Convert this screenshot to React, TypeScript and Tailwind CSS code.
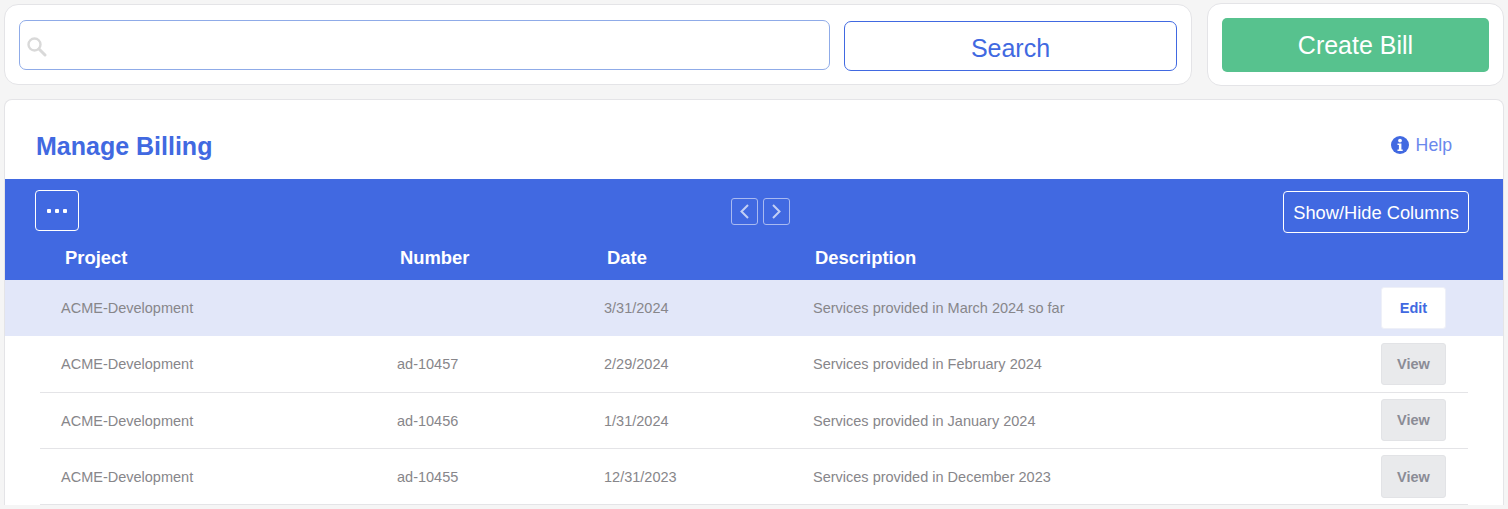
import React from "react";

const rows = [
  { project: "ACME-Development", number: "", date: "3/31/2024", desc: "Services provided in March 2024 so far", action: "Edit" },
  { project: "ACME-Development", number: "ad-10457", date: "2/29/2024", desc: "Services provided in February 2024", action: "View" },
  { project: "ACME-Development", number: "ad-10456", date: "1/31/2024", desc: "Services provided in January 2024", action: "View" },
  { project: "ACME-Development", number: "ad-10455", date: "12/31/2023", desc: "Services provided in December 2023", action: "View" },
];

export default function App() {
  return (
    <div className="h-[509px] w-[1508px] overflow-hidden bg-[#f5f5f5] font-['Liberation_Sans',Arial,sans-serif]">
      <div className="flex items-start pl-1 pr-1 pt-[3px]">
        <div className="mt-px flex h-[81px] w-[1188px] items-start rounded-[14px] border border-[#e4e4e7] bg-white pl-[14px] pt-[15px]">
          <div className="relative h-[50px] w-[811px] rounded-[7px] border border-[#8fabe8] bg-white">
            <svg className="absolute left-[6px] top-[15px]" width="21" height="21" viewBox="0 0 21 21" fill="none" stroke="#d9d9d9">
              <circle cx="8.5" cy="8.5" r="6" strokeWidth="2.4" />
              <path d="M13 13l6 6" strokeWidth="3" strokeLinecap="round" />
            </svg>
          </div>
          <button className="ml-[14px] mt-px h-[50px] w-[333px] rounded-[7px] border border-[#4169e1] bg-white pt-[5px] text-[25px] text-[#4169e1]">
            Search
          </button>
        </div>
        <div className="ml-[15px] flex h-[83px] w-[297px] items-start rounded-[14px] border border-[#e4e4e7] bg-white pl-[14px] pt-[14px]">
          <button className="h-[54px] w-[267px] rounded-[5px] bg-[#57c28e] pt-px text-[25px] text-white">Create Bill</button>
        </div>
      </div>

      <div className="ml-1 mt-[13px] w-[1500px] rounded-t-[8px] border border-b-0 border-[#e4e4e7] bg-white pb-0">
        <div className="flex h-[79px] items-center justify-between pl-[31px] pr-[51px] pt-[14px]">
          <h1 className="text-[25px] font-bold text-[#4169e1]">Manage Billing</h1>
          <div className="flex items-center gap-[7px] pb-[2px] text-[17.7px] text-[#6a88ec]">
            <svg width="18" height="18" viewBox="0 0 18 18">
              <circle cx="9" cy="9" r="9" fill="#4169e1" />
              <circle cx="9" cy="4.6" r="1.9" fill="white" />
              <path d="M6.500 7.400h3.900v6h1.300v1.600H6.500v-1.600h1.400V9H6.500z" fill="white" />
            </svg>
            Help
          </div>
        </div>

        <div className="h-[101px] bg-[#4169e1] text-white">
          <div className="flex h-[67px] items-start justify-between pl-[30px] pr-[34px]">
            <button className="mt-[11px] flex h-[41px] w-[44px] items-center justify-center gap-1 rounded-[4px] border border-white">
              <span className="h-1 w-1 rounded-[1px] bg-white" />
              <span className="h-1 w-1 rounded-[1px] bg-white" />
              <span className="h-1 w-1 rounded-[1px] bg-white" />
            </button>
            <div className="ml-[159px] mt-[19px] flex gap-[5px]">
              <button className="flex h-[27px] w-[27px] items-center justify-center rounded-[3px] border border-[#a9baf1]">
                <svg width="11" height="17" viewBox="0 0 11 17" fill="none" stroke="#c3cff5" strokeWidth="2"><path d="M9 2L2.500 8.500 9 15" /></svg>
              </button>
              <button className="flex h-[27px] w-[27px] items-center justify-center rounded-[3px] border border-[#a9baf1]">
                <svg width="11" height="17" viewBox="0 0 11 17" fill="none" stroke="#c3cff5" strokeWidth="2"><path d="M2 2l6.500 6.500L2 15" /></svg>
              </button>
            </div>
            <button className="mt-[12px] h-[42px] w-[186px] rounded-[4px] border border-white pt-px text-[18.3px] text-white">
              Show/Hide Columns
            </button>
          </div>
          <div className="grid grid-cols-[335px_207px_208px_1fr] pl-[60px] pt-px text-[18.4px] font-bold leading-[21px]">
            <span>Project</span>
            <span>Number</span>
            <span>Date</span>
            <span>Description</span>
          </div>
        </div>

        {rows.map((r, i) => (
          <div key={i} className={i === 0 ? "bg-[#e2e7f9]" : "px-[35px]"}>
            <div
              className={
                i === 0
                  ? "grid h-[56px] grid-cols-[336px_207px_209px_568px_65px] items-center pl-[56px] pt-[2px] text-[14.5px] text-[#87868a]"
                  : i === 1
                    ? "grid h-[57px] grid-cols-[336px_207px_209px_568px_65px] items-center border-b border-[#e4e4e7] pl-[21px] pt-[2px] text-[14.5px] text-[#87868a]"
                    : "grid h-[56px] grid-cols-[336px_207px_209px_568px_65px] items-center border-b border-[#e4e4e7] pl-[21px] pt-[2px] text-[14.5px] text-[#87868a]"
              }
            >
              <span>{r.project}</span>
              <span>{r.number}</span>
              <span>{r.date}</span>
              <span>{r.desc}</span>
              {r.action === "Edit" ? (
                <button className="mt-[5px] h-[42px] w-[65px] self-start rounded-[3px] border border-[#eef0f8] bg-white pt-px text-[14.5px] font-bold text-[#4169e1]">
                  Edit
                </button>
              ) : (
                <button
                  className={
                    i === 1
                      ? "mt-[5px] h-[42px] w-[65px] self-start rounded-[3px] border border-[#e2e3e6] bg-[#e9eaec] pt-px text-[14.5px] font-bold text-[#8b8c96]"
                      : i === 2
                        ? "mt-[4px] h-[42px] w-[65px] self-start rounded-[3px] border border-[#e2e3e6] bg-[#e9eaec] pt-[2px] text-[14.5px] font-bold text-[#8b8c96]"
                        : "mt-[4px] h-[43px] w-[65px] self-start rounded-[3px] border border-[#e2e3e6] bg-[#e9eaec] pt-[2px] text-[14.5px] font-bold text-[#8b8c96]"
                  }
                >
                  View
                </button>
              )}
            </div>
          </div>
        ))}
      </div>
    </div>
  );
}
